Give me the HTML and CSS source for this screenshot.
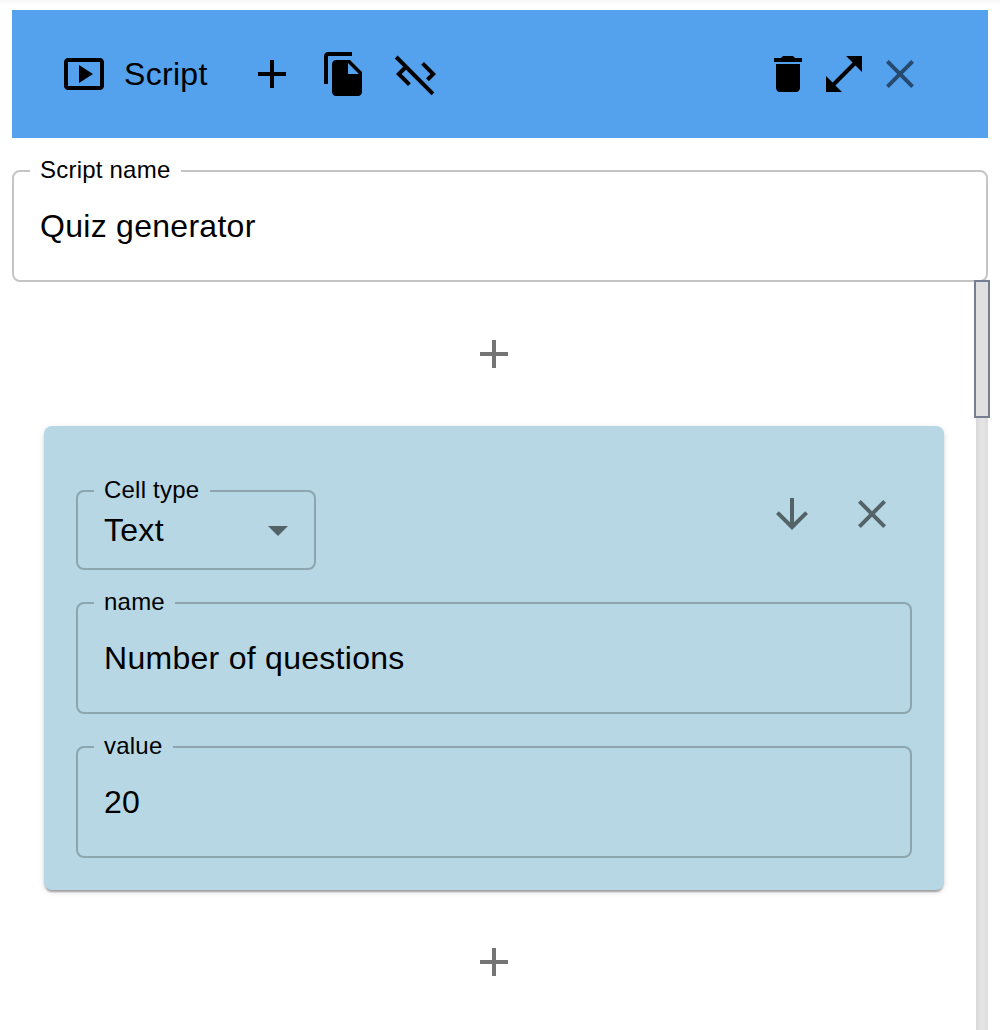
FILE: index.html
```html
<!DOCTYPE html>
<html lang="en">
<head>
<meta charset="utf-8">
<title>Script</title>
<link rel="stylesheet" href="styles.css">
</head>
<body>
<main class="panel">
  <header class="toolbar">
    <svg class="icon" viewBox="0 0 24 24"><path d="M9.5 7.5v9l7-4.5zM20 4H4c-1.1 0-2 .9-2 2v12c0 1.1.9 2 2 2h16c1.1 0 2-.9 2-2V6c0-1.1-.9-2-2-2zm0 14.01H4V5.99h16v12.02z"/></svg>
    <h1 class="title">Script</h1>
    <div class="tools">
      <svg class="icon" viewBox="0 0 24 24"><path d="M19 13h-6v6h-2v-6H5v-2h6V5h2v6h6v2z"/></svg>
      <svg class="icon" viewBox="0 0 24 24"><path d="M16 1H4c-1.1 0-2 .9-2 2v14h2V3h12V1zm-1 4l6 6v10c0 1.1-.9 2-2 2H7.99C6.89 23 6 22.1 6 21l.01-14c0-1.1.89-2 1.99-2h7zm-1 7h5.5L14 6.5V12z"/></svg>
      <svg class="icon" viewBox="0 0 24 24"><path d="M19.17 12l-4.58-4.59L16 6l6 6-3.59 3.59L17 14.17 19.17 12zM1.39 4.22l4.19 4.19L2 12l6 6 1.41-1.41L4.83 12 7 9.83l12.78 12.78 1.41-1.41L2.81 2.81 1.39 4.22z"/></svg>
    </div>
    <div class="window-tools">
      <svg class="icon" viewBox="0 0 24 24"><path d="M6 19c0 1.1.9 2 2 2h8c1.1 0 2-.9 2-2V7H6v12zM19 4h-3.5l-1-1h-5l-1 1H5v2h14V4z"/></svg>
      <svg class="icon" viewBox="0 0 24 24"><path d="M21 11V3h-8l3.29 3.29-10 10L3 13v8h8l-3.29-3.29 10-10z"/></svg>
      <svg class="icon muted" viewBox="0 0 24 24"><path d="M19 6.41L17.59 5 12 10.59 6.41 5 5 6.41 10.59 12 5 17.59 6.41 19 12 13.41 17.59 19 19 17.59 13.41 12z"/></svg>
    </div>
  </header>
  <fieldset class="field script-name">
    <legend class="legend">Script name</legend>
    <span class="value">Quiz generator</span>
  </fieldset>
  <div class="workspace">
    <div class="cells">
      <svg class="icon muted" viewBox="0 0 24 24"><path d="M19 13h-6v6h-2v-6H5v-2h6V5h2v6h6v2z"/></svg>
      <section class="card">
        <div class="card-head">
          <fieldset class="field select">
            <legend class="legend legend-type">Cell type</legend>
            <span class="value">Text</span>
            <svg class="icon muted" viewBox="0 0 24 24"><path d="M7 10l5 5 5-5z"/></svg>
          </fieldset>
          <div class="card-tools">
            <svg class="icon muted" viewBox="0 0 24 24"><path d="M20 12l-1.41-1.41L13 16.17V4h-2v12.17l-5.58-5.59L4 12l8 8 8-8z"/></svg>
            <svg class="icon muted" viewBox="0 0 24 24"><path d="M19 6.41L17.59 5 12 10.59 6.41 5 5 6.41 10.59 12 5 17.59 6.41 19 12 13.41 17.59 19 19 17.59 13.41 12z"/></svg>
          </div>
        </div>
        <fieldset class="field">
          <legend class="legend legend-name">name</legend>
          <span class="value">Number of questions</span>
        </fieldset>
        <fieldset class="field">
          <legend class="legend legend-value">value</legend>
          <span class="value">20</span>
        </fieldset>
      </section>
      <svg class="icon muted" viewBox="0 0 24 24"><path d="M19 13h-6v6h-2v-6H5v-2h6V5h2v6h6v2z"/></svg>
    </div>
    <div class="scrollbar"><div class="thumb"></div></div>
  </div>
</main>
</body>
</html>
```
FILE: styles.css
```css
* { box-sizing: border-box; }

body {
  margin: 0;
  height: 1030px;
  overflow: hidden;
  background: #fff;
  color: #000;
  font-family: "Liberation Sans", Arial, sans-serif;
}

.panel {
  height: 1030px;
  padding: 10px 12px 0;
  background: linear-gradient(#f7f7f7, #fff 5px);
  display: flex;
  flex-direction: column;
}

.icon {
  display: block;
  flex: none;
  width: 48px;
  height: 48px;
  fill: #000;
}

.muted { fill: rgba(0, 0, 0, 0.54); }

.toolbar {
  flex: none;
  display: flex;
  align-items: center;
  height: 128px;
  padding: 0 64px 0 48px;
  background: #54a1ee;
}

.title {
  width: 124px;
  margin: 0 0 0 16px;
  font-size: 32px;
  font-weight: 400;
  line-height: 48px;
  letter-spacing: 0.3px;
}

.tools {
  display: flex;
  gap: 24px;
}

.window-tools {
  display: flex;
  gap: 8px;
  margin-left: auto;
}

.field {
  flex: none;
  display: flex;
  min-width: 0;
  height: 125px;
  margin: 0;
  padding: 0 26px 0 16px;
  border: 2px solid rgba(0, 0, 0, 0.23);
  border-radius: 8px;
}

.legend {
  width: 151px;
  height: 28px;
  padding: 0 0 0 10px;
  font-size: 24px;
  line-height: 26px;
  letter-spacing: 0.22px;
  white-space: nowrap;
}

.legend-type { width: 116px; }
.legend-name { width: 81px; }
.legend-value { width: 79px; }

.value {
  padding: 17px 0 0 10px;
  font-size: 32px;
  line-height: 48px;
  letter-spacing: 0.28px;
  white-space: nowrap;
}

.script-name { margin-top: 19px; }

.workspace {
  flex: 1;
  min-height: 0;
  margin: -2px -2px 0 0;
  display: grid;
  grid-template-columns: 962px 16px;
}

.cells {
  width: 964px;
  padding: 50px 32px 0;
  display: flex;
  flex-direction: column;
  align-items: center;
  gap: 48px;
}

.card {
  width: 900px;
  height: 464px;
  padding: 51px 32px 0;
  border-radius: 8px;
  background: #b6d7e3;
  box-shadow: 0 4px 2px -2px rgba(0, 0, 0, 0.2), 0 2px 2px rgba(0, 0, 0, 0.14), 0 2px 6px rgba(0, 0, 0, 0.12);
  display: flex;
  flex-direction: column;
  gap: 19px;
}

.card-head {
  display: flex;
  justify-content: space-between;
}

.select {
  width: 240px;
  height: 93px;
  padding-right: 12px;
  justify-content: space-between;
}

.select .value { padding-top: 1px; }
.select .icon { margin-top: 1px; }

.card-tools {
  display: flex;
  gap: 32px;
  padding: 13px 16px 0 0;
}

.scrollbar {
  z-index: 1;
  background: linear-gradient(90deg, #d9d9d9, #e5e5e5 50%, #dcdcdc) center / 12px 100% no-repeat;
}

.thumb {
  height: 138px;
  border: 2px solid #748091;
  background: #e0e0e0;
}
```
